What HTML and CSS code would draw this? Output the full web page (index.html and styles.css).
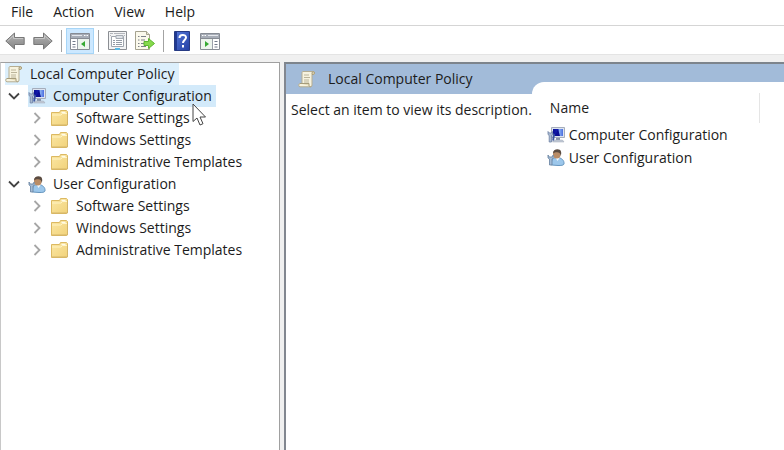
FILE: index.html
```html
<!DOCTYPE html>
<html lang="en">
<head>
  <meta charset="UTF-8">
  <meta name="viewport" content="width=device-width, initial-scale=1.0">
  <title>Local Group Policy Editor</title>
  <link rel="stylesheet" href="styles.css">
</head>
<body>
  <!-- shared icons -->
  <svg class="defs" aria-hidden="true">
    <defs>
      <linearGradient id="fold" x1="0" y1="0" x2="1" y2="1">
        <stop offset="0" stop-color="#fbe7a4"/><stop offset="1" stop-color="#f1d27a"/>
      </linearGradient>
      <linearGradient id="screen" x1="0" y1="0" x2="1" y2="0">
        <stop offset="0" stop-color="#0a0e94"/><stop offset=".5" stop-color="#1420b4"/><stop offset=".6" stop-color="#8db4f2"/><stop offset="1" stop-color="#4a6ce0"/>
      </linearGradient>
      <linearGradient id="gray" x1="0" y1="0" x2="0" y2="1">
        <stop offset="0" stop-color="#b5b5b5"/><stop offset="1" stop-color="#858585"/>
      </linearGradient>
      <linearGradient id="help" x1="0" y1="0" x2="1" y2="1">
        <stop offset="0" stop-color="#5578d8"/><stop offset="1" stop-color="#2440a4"/>
      </linearGradient>
    </defs>
    <symbol id="i-folder" viewBox="0 0 18 16">
      <path d="M.5 2.500h8l1-2h6l1 1v13l-1 1H.5z" fill="url(#fold)" stroke="#dcb961"/>
      <path d="M1 5h9l1.500-1.500H16" fill="none" stroke="#fff3c4"/>
      <path d="M10.500 2.500h4" stroke="#fffbe8" stroke-width="1.500"/>
      <path d="M16.500 3v12H1" fill="none" stroke="#d3b56a"/>
    </symbol>
    <symbol id="i-scroll" viewBox="0 0 18 18">
      <path d="M5 1.500h10.500c1.500 0 1.500 3 0 3H14V15c0 1-.7 1.800-1.700 1.800H2c-1.700 0-1.700-3.300 0-3.300h2V3c0-1 .3-1.500 1-1.500z" fill="#f7f3df" stroke="#b5ad91"/>
      <path d="M14 4.500V3c0-1.800 2.500-1.800 2.500 0 0 1-.8 1.500-2.500 1.500M2 13.500h9v2c0 1 1.500 1.700 2.500.8" fill="#e6dcb8" stroke="#a69c7b"/>
      <path d="M6 5h5M6 7.500h6M6 10h5M6 12h5" stroke="#bbb49a"/>
    </symbol>
    <symbol id="i-computer" viewBox="0 0 18 16">
      <path d="M4.500.5h13v10h-13z" fill="#dde4f0" stroke="#a5adbb"/>
      <path d="M6 2h10v7H6z" fill="url(#screen)"/>
      <path d="M11 2l2 7H8z" fill="#0a0e94"/>
      <path d="M9 11h4v2H9z" fill="#8794aa"/>
      <path d="M6.500 13h9l1.500 2H5.500z" fill="#c4ccd8" stroke="#9ca6b5" stroke-width=".5"/>
      <path d="M1 4.500v3l1.200 1V15h2.300V8.500l1-1v-3L4.500 6h-2z" fill="#a9b9d0" stroke="#6d81a4" stroke-width=".8"/>
      <path d="M6 6.500c1.500-.5 2.300 1 1.800 2.500L7 13.500H5.200z" fill="#3e58a0"/>
    </symbol>
    <symbol id="i-user" viewBox="0 0 18 17">
      <path d="M4.500 16c-.7-5 1.500-7.500 5.500-7.500 4.500 0 7.500 3 7 6.500-.5 1.500-3 1.500-6 1.500z" fill="#9cc7eb" stroke="#6796bf"/>
      <path d="M8.500 8.500l2 3.500 2.500-3.500z" fill="#f3f8fc"/>
      <ellipse cx="9.800" cy="5.200" rx="3.800" ry="4.200" fill="#b98c66"/>
      <path d="M6 4.500C6 1.500 8 .2 10.500.2c3.500 0 4.500 2.800 3.300 6.800-.5-2.800-1.500-3.800-3.800-3.800-1.500 0-3 .3-4 1.300z" fill="#5a4b40"/>
      <path d="M1 6v3l1.500 1V16h2.500v-6l1.200-1V6L5 8H2.300z" fill="#a5bcd6" stroke="#64809f" stroke-width=".8"/>
    </symbol>
    <symbol id="i-arrow" viewBox="0 0 20 18">
      <path d="M.8 9L9.500 1v4.500h9.700v7H9.500V17z" fill="url(#gray)" stroke="#787878"/>
      <path d="M2.500 9l6-5.500v3h9.500" fill="none" stroke="#c6c6c6"/>
    </symbol>
    <symbol id="i-pane" viewBox="0 0 20 17">
      <path d="M.5.5h19v16H.5z" fill="#fff" stroke="#868b93"/>
      <path d="M1 1h18v4H1z" fill="#a7adb7"/>
      <path d="M2 2.500h10" stroke="#e4e7ec"/>
      <path d="M14 2.500h1.500M16.500 2.500H18" stroke="#fff"/>
      <path d="M1 5.500h18" stroke="#868b93"/>
      <path d="M7.500 6v10" stroke="#9ca1aa"/>
      <path d="M2.500 8.500h3M2.500 11.500h3M2.500 14h3" stroke="#727b8a"/>
      <path d="M8 6h11v10H8z" fill="#edf4ed"/>
    </symbol>
    <symbol id="i-chevron" viewBox="0 0 12 12">
      <path d="M3.500 1l5 5-5 5" fill="none" stroke="currentColor" stroke-width="1.800"/>
    </symbol>
  </svg>

  <nav class="menubar">
    <button type="button">File</button>
    <button type="button">Action</button>
    <button type="button">View</button>
    <button type="button">Help</button>
  </nav>

  <div class="toolbar">
    <button type="button" aria-label="Back"><svg width="20" height="18"><use href="#i-arrow"/></svg></button>
    <button type="button" aria-label="Forward"><svg class="flip" width="20" height="18"><use href="#i-arrow"/></svg></button>
    <span class="sep"></span>
    <button type="button" class="active" aria-label="Show or hide console tree">
      <svg width="20" height="17" viewBox="0 0 20 17"><use href="#i-pane"/><path d="M15 8v6l-4-3z" fill="#35a832"/></svg>
    </button>
    <span class="sep"></span>
    <button type="button" aria-label="Properties">
      <svg width="19" height="20" viewBox="0 0 19 20">
        <path d="M.5.5h18v18H.5z" fill="#f3f4f5" stroke="#8b8e93"/>
        <path d="M2 2.500h3M6 2.500h11M2 4.500h1M16 4.500h1" stroke="#b3b6bc"/>
        <path d="M3.500 5.500h12v10h-12z" fill="#fff" stroke="#a0a6ae"/>
        <path d="M8 4.500h7v3H8z" fill="#dfe3e8" stroke="#a5abb3"/>
        <path d="M5 9.500h2M8 9.500h6M5 11.500h2M8 11.500h6M5 13.500h2M8 13.500h6" stroke="#949ba5"/>
        <path d="M7 18h5" stroke="#58b8e4" stroke-width="2"/>
      </svg>
    </button>
    <button type="button" aria-label="Export list">
      <svg width="20" height="20" viewBox="0 0 20 20">
        <path d="M.5.500h11l3 3v15H.5z" fill="#fbf9ec" stroke="#a5a28f"/>
        <path d="M11.500.5v3h3" fill="#e6e3d2" stroke="#a5a28f"/>
        <path d="M3 5.500h1.500M3 9h1.500M3 12.500h1.500M3 15.500h1.500M6 5.500h5M6 9h4M6 12.500h4M6 15.500h5" stroke="#7c8088"/>
        <path d="M9 10.500h4.500V7.500l6 5-6 5v-3H9z" fill="#86d94c" stroke="#5cb62f"/>
      </svg>
    </button>
    <span class="sep"></span>
    <button type="button" aria-label="Help">
      <svg width="16" height="20" viewBox="0 0 16 20">
        <path d="M.5.5h15v19H.5z" fill="url(#help)" stroke="#263a83"/>
        <path d="M2 1v18" stroke="#203991" stroke-width="2"/>
        <path d="M5.500 7c0-4 6.500-4 6.500-.5C12 9 9 9 9 12" fill="none" stroke="#fff" stroke-width="2"/>
        <path d="M8 14h2v2.500H8z" fill="#fff"/>
      </svg>
    </button>
    <button type="button" aria-label="Show or hide action pane">
      <svg width="20" height="17" viewBox="0 0 20 17"><use class="flip" href="#i-pane"/><path d="M5 8v6l4-3z" fill="#35a832"/></svg>
    </button>
  </div>

  <main class="panes">
    <aside class="tree-pane">
      <ul class="tree">
        <li>
          <div class="row"><a href="#policy" class="selected"><svg width="18" height="18"><use href="#i-scroll"/></svg>Local Computer Policy</a></div>
        </li>
        <li>
          <div class="row">
            <button type="button" class="toggle open" aria-label="Collapse Computer Configuration"><svg width="12" height="12"><use href="#i-chevron"/></svg></button>
            <a href="#computer" class="selected hover"><svg width="18" height="16"><use href="#i-computer"/></svg>Computer Configuration</a>
          </div>
          <ul>
            <li class="row"><button type="button" class="toggle" aria-label="Expand Software Settings"><svg width="12" height="12"><use href="#i-chevron"/></svg></button><a href="#c-software"><svg width="18" height="16"><use href="#i-folder"/></svg>Software Settings</a></li>
            <li class="row"><button type="button" class="toggle" aria-label="Expand Windows Settings"><svg width="12" height="12"><use href="#i-chevron"/></svg></button><a href="#c-windows"><svg width="18" height="16"><use href="#i-folder"/></svg>Windows Settings</a></li>
            <li class="row"><button type="button" class="toggle" aria-label="Expand Administrative Templates"><svg width="12" height="12"><use href="#i-chevron"/></svg></button><a href="#c-templates"><svg width="18" height="16"><use href="#i-folder"/></svg>Administrative Templates</a></li>
          </ul>
        </li>
        <li>
          <div class="row">
            <button type="button" class="toggle open" aria-label="Collapse User Configuration"><svg width="12" height="12"><use href="#i-chevron"/></svg></button>
            <a href="#user"><svg width="18" height="17"><use href="#i-user"/></svg>User Configuration</a>
          </div>
          <ul>
            <li class="row"><button type="button" class="toggle" aria-label="Expand Software Settings"><svg width="12" height="12"><use href="#i-chevron"/></svg></button><a href="#u-software"><svg width="18" height="16"><use href="#i-folder"/></svg>Software Settings</a></li>
            <li class="row"><button type="button" class="toggle" aria-label="Expand Windows Settings"><svg width="12" height="12"><use href="#i-chevron"/></svg></button><a href="#u-windows"><svg width="18" height="16"><use href="#i-folder"/></svg>Windows Settings</a></li>
            <li class="row"><button type="button" class="toggle" aria-label="Expand Administrative Templates"><svg width="12" height="12"><use href="#i-chevron"/></svg></button><a href="#u-templates"><svg width="18" height="16"><use href="#i-folder"/></svg>Administrative Templates</a></li>
          </ul>
        </li>
      </ul>
    </aside>

    <section class="detail">
      <h1><svg width="18" height="18"><use href="#i-scroll"/></svg>Local Computer Policy</h1>
      <div class="content">
        <p class="description">Select an item to view its description.</p>
        <div class="list">
          <table>
            <thead><tr><th>Name</th></tr></thead>
            <tbody>
              <tr><td><a href="#computer"><svg width="18" height="16"><use href="#i-computer"/></svg>Computer Configuration</a></td></tr>
              <tr><td><a href="#user"><svg width="18" height="17"><use href="#i-user"/></svg>User Configuration</a></td></tr>
            </tbody>
          </table>
        </div>
      </div>
    </section>
  </main>

  <svg class="pointer" width="15" height="23" viewBox="0 0 15 23" aria-hidden="true">
    <path d="M1 1v17.500l4-3.500 3 7 3-1.300-3-6.700h5.500z" fill="#fff" stroke="#444"/>
  </svg>
</body>
</html>
```

FILE: styles.css
```css
* { box-sizing: border-box; }
body {
  margin: 0;
  min-height: 100vh;
  display: flex;
  flex-direction: column;
  background: #f0f0f0;
  color: #1c1c1c;
  font-family: "Open Sans", "Noto Sans", sans-serif;
  font-size: 14px;
  line-height: 22px;
}
button {
  padding: 0;
  border: none;
  background: none;
  color: inherit;
  font: inherit;
}
a {
  color: inherit;
  text-decoration: none;
}
ul {
  margin: 0;
  padding: 0;
  list-style: none;
}
svg { flex: none; }
.defs {
  position: absolute;
  width: 0;
  height: 0;
}
.flip {
  transform: scaleX(-1);
  transform-origin: center;
}

.menubar {
  display: flex;
  gap: 20px;
  height: 26px;
  padding: 0 11px 2px;
  background: #fff;
  border-bottom: 1px solid #d5d5d5;
}
.toolbar {
  display: flex;
  align-items: center;
  height: 29px;
  padding: 2px 0 0 1px;
  background: #fff;
  border-bottom: 1px solid #e4e4e4;
}
.toolbar button {
  display: flex;
  align-items: center;
  justify-content: center;
  width: 28px;
  height: 26px;
}
.toolbar .active {
  background: #cce8ff;
  border: 1px solid #a6d5f7;
}
.sep {
  width: 1px;
  height: 22px;
  margin: 0 4px;
  background: #a3a3a3;
}

.panes {
  flex: 1;
  display: flex;
  gap: 4px;
  padding-top: 7px;
}
.tree-pane {
  flex: 0 0 280px;
  background: #fff;
  border: 1px solid #a0a0a0;
  border-bottom: none;
  border-left-color: #c8c8c8;
}
.row {
  display: flex;
  height: 22px;
  padding-left: 4px;
}
.row a {
  display: flex;
  align-items: center;
  gap: 7px;
  padding-right: 4px;
}
.row .selected { background: #dceffc; }
.row .hover { background: #d3eafa; }
.tree ul .row { padding-left: 27px; }
.toggle {
  display: flex;
  align-items: center;
  width: 23px;
  padding-left: 3px;
  color: #a6a6a6;
}
.open {
  color: #444;
}
.open svg {
  transform: rotate(90deg);
}

.detail {
  flex: 1;
  display: flex;
  flex-direction: column;
  background: #fff;
  border-top: 2px solid #7d848c;
  border-left: 2px solid #828790;
}
h1 {
  display: flex;
  align-items: center;
  gap: 12px;
  height: 30px;
  margin: 0;
  padding-left: 12px;
  background: #a2bbd9;
  font-size: 14px;
  font-weight: normal;
}
.content {
  flex: 1;
  display: flex;
}
.description {
  flex: 0 0 245px;
  margin: 0;
  padding: 5px 0 0 5px;
  white-space: nowrap;
}
.list {
  flex: 1;
  margin-top: -12px;
  padding: 11px 24px 0 15px;
  background: #fff;
  border-top-left-radius: 12px;
}
table {
  width: 100%;
  border-collapse: collapse;
}
th {
  height: 30px;
  padding: 0 3px;
  border-right: 1px solid #e5e5e5;
  font-weight: normal;
  text-align: left;
}
td {
  height: 23px;
  padding: 0;
}
td a {
  display: flex;
  align-items: center;
  gap: 4px;
}

/* mouse pointer over the tree */
.pointer {
  position: absolute;
  left: 192px;
  top: 103px;
}
```
